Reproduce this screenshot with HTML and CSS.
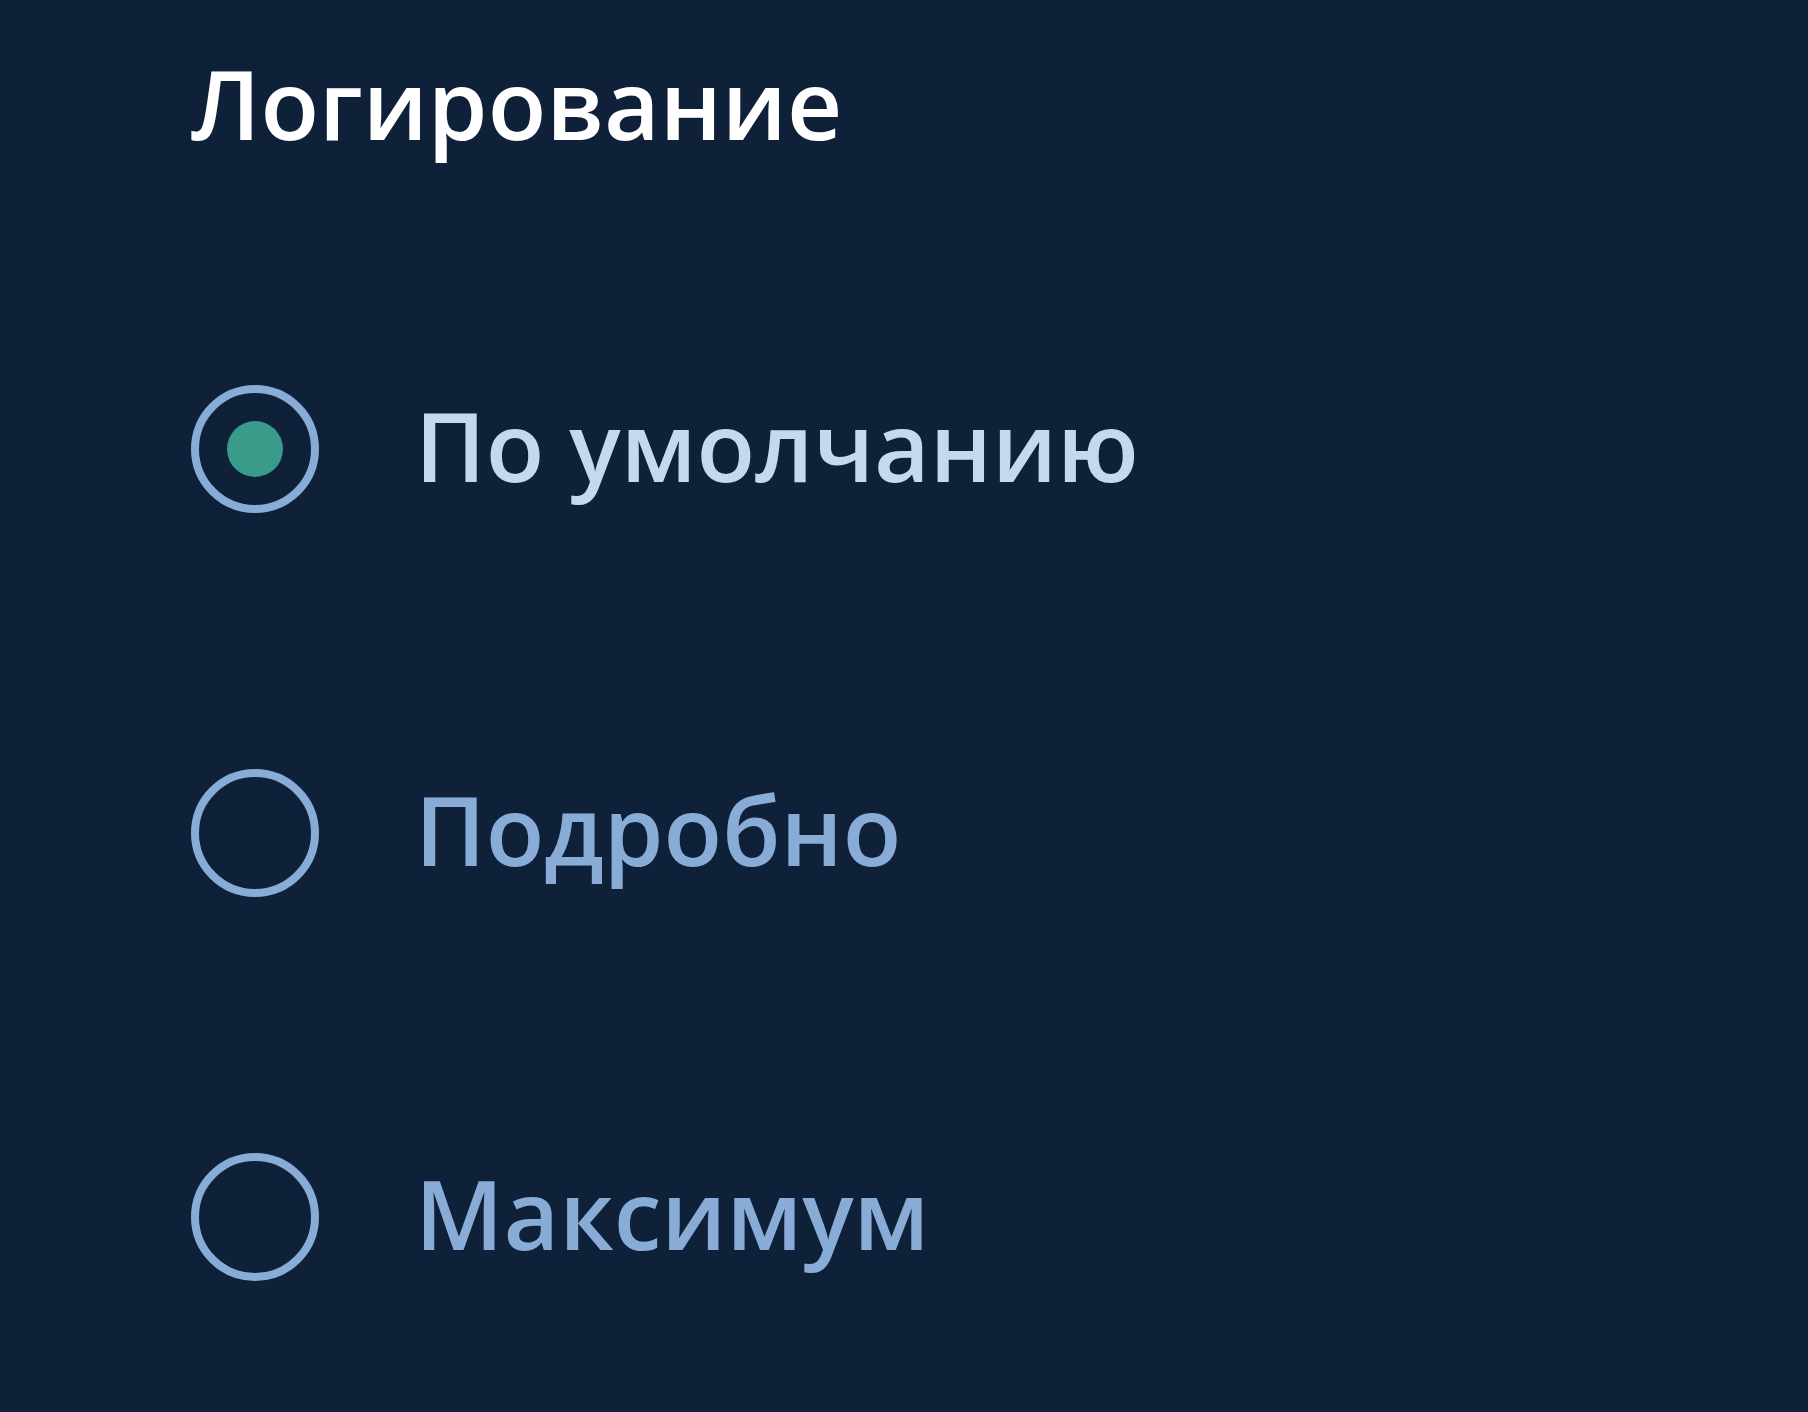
FILE: index.html
```html
<!DOCTYPE html>
<html lang="ru">
<head>
<meta charset="utf-8">
<title>Логирование</title>
<link rel="stylesheet" href="styles.css">
</head>
<body>
<main class="panel">
  <h1 class="title">Логирование</h1>
  <div class="options" role="radiogroup">
    <label class="option option--checked">
      <span class="radio"><span class="radio__dot"></span></span>
      <span class="option__label">По умолчанию</span>
    </label>
    <label class="option">
      <span class="radio"></span>
      <span class="option__label">Подробно</span>
    </label>
    <label class="option">
      <span class="radio"></span>
      <span class="option__label">Максимум</span>
    </label>
  </div>
</main>
</body>
</html>
```
FILE: styles.css
```css
html, body {
  margin: 0;
  padding: 0;
  background: #0f2139;
}
body {
  font-family: "Open Sans", "Noto Sans", sans-serif;
  min-height: 1412px;
}
.panel {
  padding: 45px 0 0 191px;
}
.title {
  margin: 0;
  font-size: 96px;
  font-weight: 600;
  line-height: 116px;
  color: #ffffff;
}
.options {
  display: flex;
  flex-direction: column;
  gap: 256px;
  margin-top: 224px;
}
.option {
  display: flex;
  align-items: center;
  gap: 96px;
  height: 128px;
}
.radio {
  box-sizing: border-box;
  width: 128px;
  height: 128px;
  border: 8px solid #88acd6;
  border-radius: 50%;
  display: flex;
  align-items: center;
  justify-content: center;
  flex: none;
}
.radio__dot {
  width: 56px;
  height: 56px;
  border-radius: 50%;
  background: #3a9b8b;
}
.option__label {
  font-size: 96px;
  font-weight: 600;
  color: #88acd6;
  line-height: 1;
  padding-bottom: 8px;
}
.option--checked .option__label {
  color: #c6d8ec;
}
```
